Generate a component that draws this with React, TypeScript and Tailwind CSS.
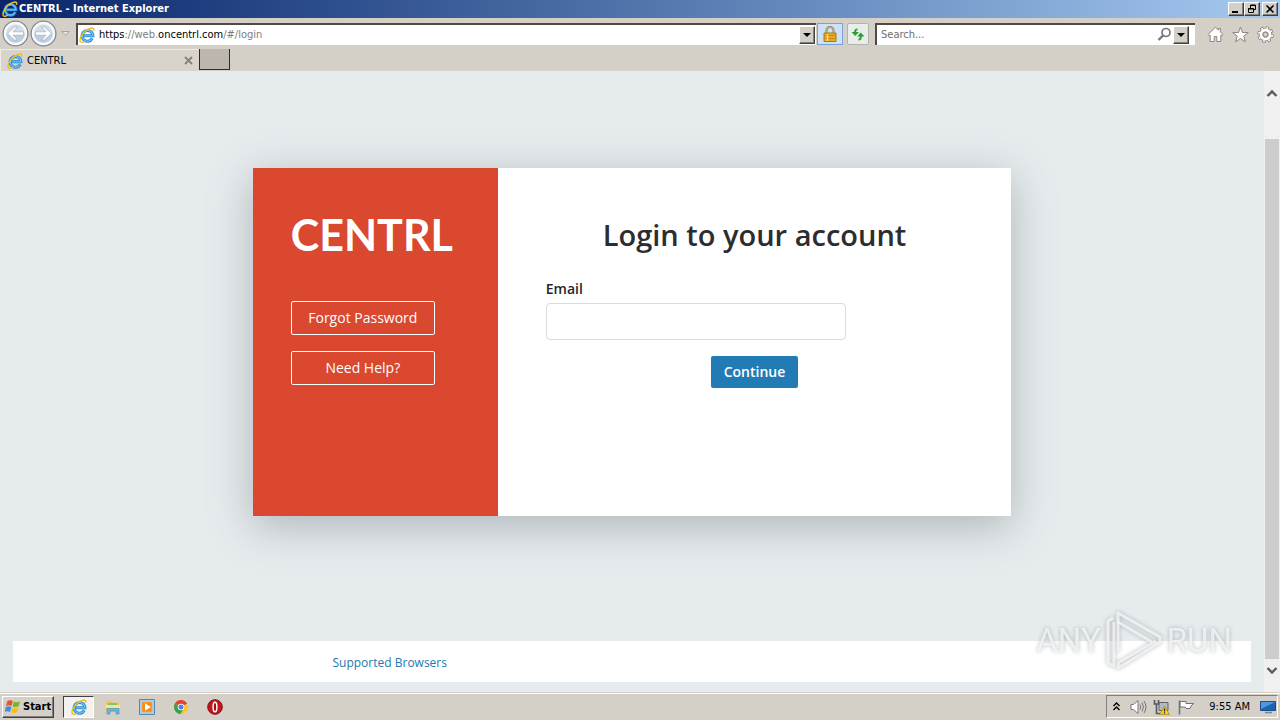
import type { ReactNode } from 'react'

const raised =
  'border border-t-white border-l-white border-r-[#404040] border-b-[#404040] bg-[#d4d0c8] shadow-[inset_-1px_-1px_0_#808080]'

function IeIcon({ size = 16 }: { size?: number }) {
  return (
    <svg width={size} height={size} viewBox="0 0 16 16" fill="none" className="shrink-0">
      <path d="M13.300 11.300a5.400 5.400 0 1 1 .6-2.500H4.500" stroke="#2586d0" strokeWidth="3" />
      <path d="M13.300 11.300a5.400 5.400 0 1 1 .6-2.500H4.500" stroke="#6cc3f3" strokeWidth="1.300" />
      <path d="M1.600 15C-.6 12 4.400 4 10.500 1.600c3-1.200 4.800-.6 4 2.200" stroke="#f0bd23" strokeWidth="1.500" />
      <path d="M1.600 15c1 .8 2.800 0 4-.9" stroke="#f0bd23" strokeWidth="1.400" />
    </svg>
  )
}

function NavCircle({ label, flip }: { label: string; flip?: boolean }) {
  return (
    <button aria-label={label} className="size-[27px] shrink-0">
      <svg width="27" height="27" viewBox="0 0 27 27" className={flip ? '-scale-x-100' : ''}>
        <circle cx="13.5" cy="13.5" r="12.3" fill="#d3dde8" stroke="#858b93" strokeWidth="1.5" />
        <circle cx="13.5" cy="13.5" r="10.5" fill="none" stroke="#f7f9fb" strokeWidth="2.4" />
        <path d="M4 13.500a9.500 9.500 0 0 0 19 0z" fill="#adc4db" opacity=".6" />
        <path
          d="M5.5 13.500l7-6.500h3l-4.500 4.800h10.500v3.400H11l4.500 4.800h-3z"
          fill="#fff"
          stroke="#a3acb8"
          strokeWidth=".7"
        />
      </svg>
    </button>
  )
}

function DropButton({ label }: { label: string }) {
  return (
    <button aria-label={label} className={`flex h-[18px] w-4 shrink-0 items-center justify-center ${raised}`}>
      <svg width="8" height="4" viewBox="0 0 8 4">
        <path d="M0 0h8L4 4z" fill="#000" />
      </svg>
    </button>
  )
}

function WindowButton({ label, children }: { label: string; children: ReactNode }) {
  return (
    <button aria-label={label} className={`flex h-3.5 w-4 items-center justify-center ${raised}`}>
      <svg width="10" height="10" viewBox="0 0 10 10" fill="none" stroke="#000">
        {children}
      </svg>
    </button>
  )
}

function TitleBar() {
  return (
    <header className="flex h-[18px] shrink-0 items-center justify-between bg-linear-to-r from-[#0a246a] to-[#a6caf0] px-0.5">
      <div className="flex items-center gap-px">
        <IeIcon />
        <h1 className="text-[11px] leading-4 font-bold text-white">CENTRL - Internet Explorer</h1>
      </div>
      <div className="flex">
        <WindowButton label="Minimize">
          <path d="M1 8h6" strokeWidth="2" />
        </WindowButton>
        <WindowButton label="Restore">
          <path d="M3.500 4V1h5v4.500H6.500M3 1.500h6" />
          <path d="M1.500 4.500h5v4h-5zM1 5h6" />
        </WindowButton>
        <div className="w-0.5" />
        <WindowButton label="Close">
          <path d="M1.500 1.500l7 7M8.500 1.500l-7 7" strokeWidth="1.600" />
        </WindowButton>
      </div>
    </header>
  )
}

function NavBar() {
  return (
    <div className="flex h-[31px] shrink-0 items-center bg-[#d4d0c8] pr-1.5 pl-0.5">
      <div className="flex gap-px">
        <NavCircle label="Back" />
        <NavCircle label="Forward" flip />
      </div>
      <svg width="9" height="5" viewBox="0 0 9 5" className="mr-1.5 ml-1 shrink-0">
        <path d="M.5.5h8l-4 4z" fill="#e4e1dc" stroke="#aaa59d" />
      </svg>
      <div className="flex h-[22px] flex-1 items-center border-t-2 border-l-2 border-[#504a43] bg-white px-px">
        <IeIcon />
        <span className="ml-1 flex-1 text-[11px] leading-4 text-[#7d7d7d]">
          <span className="text-black">https</span>://web.<span className="text-black">oncentrl.com</span>/#/login
        </span>
        <DropButton label="Show address history" />
      </div>
      <button
        aria-label="Security report"
        className="ml-px flex h-[22px] w-[26px] items-center justify-center border border-[#7ba2d8] bg-[#cde1f8]"
      >
        <svg width="14" height="16" viewBox="0 0 14 16" fill="none">
          <path d="M3.500 8V4.500a3.500 3.500 0 0 1 7 0V8" stroke="#8d7951" strokeWidth="2" />
          <path d="M3.500 7V4.500a3.500 3.500 0 0 1 7 0V7" stroke="#dccb9d" strokeWidth=".7" />
          <path d="M1 7h12v8.500H1z" fill="#e9ab24" stroke="#ad7810" />
          <path d="M1 9.500h12M1 12.500h12" stroke="#c88915" />
          <path d="M4.500 8v7" stroke="#ffe07a" strokeWidth="1.500" />
        </svg>
      </button>
      <button
        aria-label="Refresh"
        className="ml-1 flex h-[22px] w-[22px] items-center justify-center rounded-xs border border-[#b3b1ad] bg-[#e9edea]"
      >
        <svg width="16" height="16" viewBox="0 0 16 16" fill="#2f9a36">
          <path d="M7.500 2.500C5 2.500 4.200 4 4.200 6H1.500l3.700 4L9 6H6.200c0-1.200.3-2 1.300-2z" />
          <path d="M8.500 14.500c2.500 0 3.300-1.500 3.300-4h2.700l-3.700-4-3.800 4h2.800c0 1.200-.3 2.200-1.300 2.200z" />
        </svg>
      </button>
      <div className="ml-1.5 flex h-[22px] w-80 items-center border-t-2 border-l-2 border-[#504a43] bg-white pr-1.5 pl-1">
        <input
          aria-label="Search"
          placeholder="Search..."
          className="min-w-0 flex-1 text-[11px] leading-4 outline-none placeholder:text-[#6d6d6d]"
        />
        <svg width="15" height="15" viewBox="0 0 15 15" fill="none" stroke="#77777c" className="mr-px">
          <circle cx="9" cy="5.500" r="4" strokeWidth="1.700" />
          <path d="M6 8.500L1.500 13" strokeWidth="2.400" />
        </svg>
        <DropButton label="Search options" />
      </div>
      <div className="ml-3 flex gap-2 pt-0.5">
        <button aria-label="Home">
          <svg width="17" height="17" viewBox="0 0 17 17" fill="#fff" stroke="#8a8681" strokeLinejoin="round">
            <path d="M8.500 1.200L1 8.500l1.300 1.300.9-.8v6.500h4v-5h2.600v5h4V9l.9.800L16 8.500l-2.600-2.600V2.500h-2v1.600z" />
          </svg>
        </button>
        <button aria-label="Favorites">
          <svg width="17" height="17" viewBox="0 0 17 17" fill="#fff" stroke="#8a8681" strokeLinejoin="round">
            <path d="M8.500 1l2 5.500 5.800.1-4.600 3.500 1.700 5.700-4.900-3.400-4.900 3.400 1.700-5.700L.7 6.600l5.800-.1z" />
          </svg>
        </button>
        <button aria-label="Tools">
          <svg width="17" height="17" viewBox="0 0 17 17" fill="none">
            <circle cx="8.500" cy="8.500" r="6.700" stroke="#8a8681" strokeWidth="3.200" strokeDasharray="3.100 2.160" />
            <circle cx="8.500" cy="8.500" r="4.700" stroke="#8a8681" strokeWidth="4.200" />
            <circle cx="8.500" cy="8.500" r="6.700" stroke="#fff" strokeWidth="1.800" strokeDasharray="1.700 3.560" strokeDashoffset="-.7" />
            <circle cx="8.500" cy="8.500" r="4.500" stroke="#fff" strokeWidth="2.800" />
            <circle cx="8.500" cy="8.500" r="2.400" fill="#d4d0c8" stroke="#8a8681" />
          </svg>
        </button>
      </div>
    </div>
  )
}

function TabStrip() {
  return (
    <div className="flex h-[22px] shrink-0 bg-[#d4d0c8]">
      <div className="flex w-[199px] items-center border-t border-l border-[#efece7] bg-[#d8d3cb] px-1.5">
        <IeIcon />
        <span className="ml-1 flex-1 text-[11px] leading-4 text-black">CENTRL</span>
        <button aria-label="Close tab">
          <svg width="9" height="9" viewBox="0 0 9 9" stroke="#85807a" strokeWidth="1.800">
            <path d="M1 1l7 7M8 1L1 8" />
          </svg>
        </button>
      </div>
      <button aria-label="New tab" className="h-[21px] w-[31px] border border-t-0 border-[#2e2b28] bg-[#bdb6af]" />
    </div>
  )
}

function LoginCard() {
  return (
    <section className="flex min-h-[348px] w-3/5 bg-white shadow-[0_10px_40px_rgba(70,75,80,0.34)]">
      <aside className="flex w-[245px] shrink-0 flex-col bg-[#da482f] pt-11 pl-[38px]">
        <div className="font-[Lato,sans-serif] text-[43px] leading-[46px] font-bold text-white">CENTRL</div>
        <div className="mt-[43px] flex w-36 flex-col gap-4">
          <button className="h-[34px] rounded-xs border border-white text-sm text-white">Forgot Password</button>
          <button className="h-[34px] rounded-xs border border-white text-sm text-white">Need Help?</button>
        </div>
      </aside>
      <form className="flex flex-1 flex-col px-12 pt-11">
        <h2 className="text-center text-[29px] leading-[46px] font-semibold text-[#2c2d30]">Login to your account</h2>
        <label htmlFor="email" className="mt-5 text-sm leading-[22px] font-semibold text-[#252628]">
          Email
        </label>
        <input
          id="email"
          type="email"
          className="mt-[3px] h-[37px] w-[300px] rounded border border-[#d9dadc] px-3 text-sm outline-none"
        />
        <button
          type="button"
          className="mt-4 h-8 self-center rounded-xs bg-[#217cb6] px-[13px] text-sm font-semibold text-white"
        >
          Continue
        </button>
      </form>
    </section>
  )
}

function Scrollbar() {
  return (
    <div aria-hidden className="flex w-4 shrink-0 flex-col items-center bg-[#f0f0f0] pt-[18px] pb-[17px]">
      <svg width="12" height="8" viewBox="0 0 12 8" fill="none" stroke="#5a5a5a" strokeWidth="2.400">
        <path d="M1.500 7L6 2.500 10.500 7" />
      </svg>
      <div className="mt-[42px] mb-2 w-3.5 flex-1 bg-[#cdcdcd]" />
      <svg width="12" height="8" viewBox="0 0 12 8" fill="none" stroke="#5a5a5a" strokeWidth="2.400">
        <path d="M1.500 1L6 5.500 10.500 1" />
      </svg>
    </div>
  )
}

function Watermark() {
  return (
    <div className="pointer-events-none absolute right-12 bottom-5 flex items-center gap-1 font-[Roboto,sans-serif] text-[33px] leading-[62px] text-[#f5f6f7]/80 drop-shadow-[0_0_2px_rgba(110,115,120,0.6)]">
      <span>ANY</span>
      <svg
        width="58"
        height="62"
        viewBox="0 0 58 62"
        fill="none"
        stroke="#f5f6f7"
        strokeOpacity=".8"
        strokeWidth="3"
        strokeLinejoin="round"
      >
        <path d="M13 41V3l42 24v5L13 58v-5l38-22" />
        <path d="M8 8L3 11v42l6 3V12M13 12l34 20" />
      </svg>
      <span>RUN</span>
    </div>
  )
}

function Taskbar() {
  return (
    <footer className="flex h-7 shrink-0 items-center border-t border-[#d4d0c8] bg-[#d4d0c8] px-0.5 shadow-[inset_0_1px_0_#fff]">
      <button className={`flex h-[22px] w-[52px] items-center gap-0.5 pl-0.5 font-bold text-black ${raised}`}>
        <svg width="16" height="15" viewBox="0 0 16 15">
          <path d="M2.500 2C4 .8 6 .9 7.800 2L6.600 7C5 6 3 6 1 7z" fill="#e8541f" />
          <path d="M8.800 2.400c2 1 4 1 6.200-.2L13.700 7c-2 1.300-4 1.300-6 .5z" fill="#74b52b" />
          <path d="M.8 8c2-1 4-.8 5.600 0L5 13c-1.600-1-3.500-1-5.300 0z" fill="#3f8de0" />
          <path d="M7.500 8.500c2 .9 4 .8 6-.3L12 13c-2 1.200-4 1.200-5.800.4z" fill="#f5be22" />
        </svg>
        <span className="text-[11px] leading-4">Start</span>
      </button>
      <button
        aria-label="Internet Explorer"
        className="ml-[9px] flex h-[22px] w-[31px] items-center justify-center border border-t-[#404040] border-r-white border-b-white border-l-[#404040] bg-[#f4f2ee]"
      >
        <IeIcon />
      </button>
      <div className="ml-[11px] flex gap-[18px]">
        <button aria-label="Windows Explorer">
          <svg width="16" height="16" viewBox="0 0 16 16">
            <path d="M1 2h5l1 1.500h7V13H1z" fill="#e8c861" />
            <path d="M3 4h9v5H3z" fill="#85c46f" />
            <path d="M1 6h14v3H1z" fill="#f5e396" />
            <path d="M2 15V9.500h12V15h-3v-3H5v3z" fill="#68b7df" stroke="#3f8cb8" strokeWidth=".6" />
          </svg>
        </button>
        <button aria-label="Media Player">
          <svg width="16" height="16" viewBox="0 0 16 16">
            <path d="M.5.5h15v15H.5z" fill="#a9cdea" stroke="#4f88bb" />
            <path d="M3 3h10v10H3z" fill="#f28a17" stroke="#f7b45e" strokeWidth=".8" />
            <path d="M6 4.200v7.600L12 8z" fill="#fff" />
          </svg>
        </button>
        <button aria-label="Chrome">
          <svg width="16" height="16" viewBox="0 0 16 16">
            <circle cx="8" cy="8" r="7" fill="#f7c530" />
            <path d="M8 8L1.900 4.600a7 7 0 0 1 12.200 0z" fill="#df4436" />
            <path d="M8 8L1.900 4.600A7 7 0 0 0 7.500 15l3-5.400z" fill="#36a04e" />
            <circle cx="8" cy="8" r="3.300" fill="#fff" />
            <circle cx="8" cy="8" r="2.500" fill="#4a82e8" />
          </svg>
        </button>
        <button aria-label="Opera">
          <svg width="16" height="16" viewBox="0 0 16 16">
            <circle cx="8" cy="8" r="7.300" fill="#c0161c" stroke="#7e1014" />
            <ellipse cx="8" cy="8" rx="1.900" ry="4.800" fill="#a30d12" stroke="#fff" strokeWidth="1.500" />
          </svg>
        </button>
      </div>
      <div className="ml-auto flex h-[23px] items-center border border-t-[#808080] border-r-white border-b-white border-l-[#808080] pr-px pl-1.5">
        <svg width="7" height="9" viewBox="0 0 7 9" fill="none" stroke="#000" strokeWidth="1.400">
          <path d="M.5 4l3-3 3 3M.5 8l3-3 3 3" />
        </svg>
        <svg width="17" height="16" viewBox="0 0 17 16" fill="none" stroke="#77777a" className="ml-2.5">
          <path d="M1 5.500h2.500L8 1.500v13l-4.500-4H1z" fill="#fff" />
          <path d="M10 5.500q1.500 2.500 0 5M12 3.500q3 4.500 0 9M14 2q4 6 0 12" />
        </svg>
        <svg width="17" height="16" viewBox="0 0 17 16" fill="none" className="ml-1.5">
          <path d="M6 3.500h9v8H6z" fill="#aeb9c5" stroke="#60646a" />
          <path d="M1.500 1v4h4V1M3.500 5v9.500h4" stroke="#55585c" strokeWidth="1.600" />
          <path d="M11.500 7l5 8.500h-10z" fill="#f9cd22" stroke="#a8820c" strokeWidth=".7" />
          <path d="M11.500 9.500v3M11.500 13.200v1.200" stroke="#222" strokeWidth="1.200" />
        </svg>
        <svg width="17" height="16" viewBox="0 0 17 16" fill="#fff" stroke="#707276" className="ml-2">
          <path d="M2 2.500h6v2h7.500L13 7l-1 2.500H8l-1-1.500H2z" />
          <path d="M1.500 1.500v14" strokeWidth="1.600" />
        </svg>
        <time className="ml-3.5 text-[11px] leading-4 text-black">9:55 AM</time>
        <svg width="16" height="14" viewBox="0 0 16 14" className="ml-2.5">
          <path d="M.5 1.500h15v9H.5z" fill="#1d63b4" stroke="#204c82" />
          <path d="M1 2h14L1 9z" fill="#4f97de" />
          <path d="M5 12.500h7" stroke="#6989a9" strokeWidth="1.500" />
        </svg>
      </div>
    </footer>
  )
}

export default function App() {
  return (
    <div className="flex h-screen flex-col overflow-hidden bg-[#d4d0c8] font-['DejaVu_Sans_Condensed','DejaVu_Sans',sans-serif]">
      <TitleBar />
      <NavBar />
      <TabStrip />
      <div className="relative flex min-h-0 flex-1 font-['Open_Sans',sans-serif]">
        <main className="flex flex-1 flex-col items-center bg-[#e6ebee] pt-[97px] pb-2.5">
          <LoginCard />
          <div className="mt-auto flex w-full px-[13px]">
            <div className="flex h-[41px] flex-1 items-center bg-white pt-0.5">
              <a href="#browsers" className="ml-[25%] pl-2.5 text-xs text-[#2478ad]">
                Supported Browsers
              </a>
            </div>
          </div>
        </main>
        <Scrollbar />
        <Watermark />
      </div>
      <Taskbar />
    </div>
  )
}
